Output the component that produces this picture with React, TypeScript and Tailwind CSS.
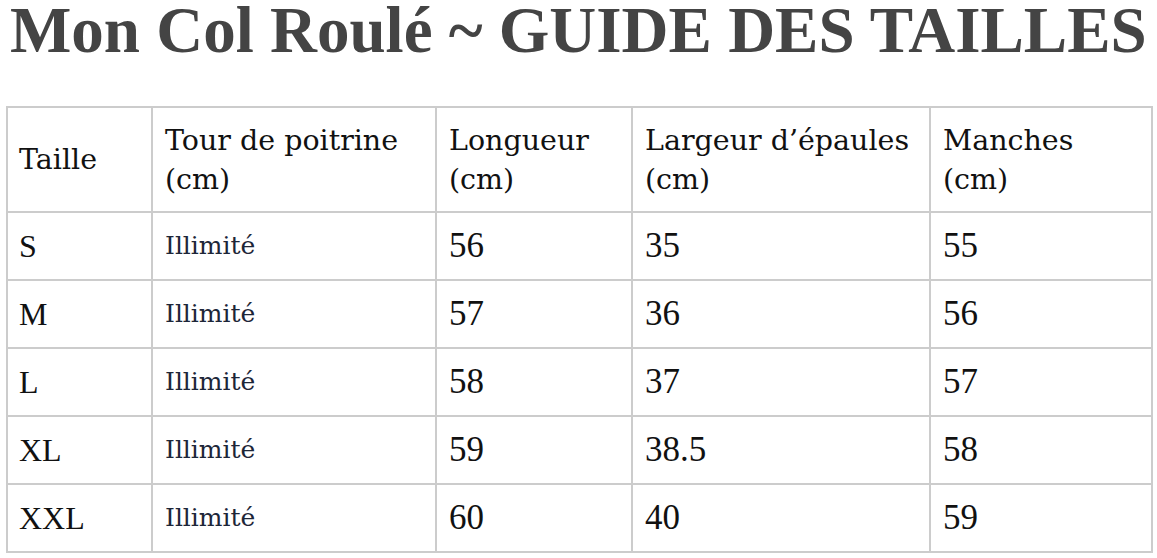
import React from "react";

const rows = [
  ["S", "56", "35", "55"],
  ["M", "57", "36", "56"],
  ["L", "58", "37", "57"],
  ["XL", "59", "38.5", "58"],
  ["XXL", "60", "40", "59"],
];

const cell = "border-2 border-[#cccccc] align-middle";
const dv = { fontFamily: '"DejaVu Serif", serif' };

export default function App() {
  return (
    <div className="w-[1157px] h-[558px] bg-white overflow-hidden pt-px" style={{ fontFamily: '"Liberation Serif", serif' }}>
      <h1 className="pl-[10px] text-[65px] leading-[59px] font-bold text-[#444444] whitespace-nowrap">
        Mon Col Roulé ~ GUIDE DES TAILLES
      </h1>
      <table className="ml-[6px] mt-[46px] border-collapse table-fixed w-[1147px] text-[#111111]">
        <colgroup>
          <col className="w-[145px]" />
          <col className="w-[284px]" />
          <col className="w-[196px]" />
          <col className="w-[298px]" />
          <col className="w-[222px]" />
        </colgroup>
        <tbody>
          <tr className="h-[105px]">
            <td className={`${cell} pl-[11px] text-[28.5px] leading-[39px]`} style={dv}>Taille</td>
            <td className={`${cell} pl-[12px] text-[28.5px] leading-[39px]`} style={dv}>Tour de poitrine<br />(cm)</td>
            <td className={`${cell} pl-[12px] text-[28.5px] leading-[39px]`} style={dv}>Longueur<br />(cm)</td>
            <td className={`${cell} pl-[12px] text-[28.5px] leading-[39px]`} style={dv}>Largeur d’épaules<br />(cm)</td>
            <td className={`${cell} pl-[12px] text-[28.5px] leading-[39px]`} style={dv}>Manches<br />(cm)</td>
          </tr>
          {rows.map((r) => (
            <tr key={r[0]} className="h-[68px]">
              <td className={`${cell} pl-[11px] text-[32px]`}>{r[0]}</td>
              <td className={`${cell} pl-[12px] text-[25px] text-[#1d2638]`} style={dv}>Illimité</td>
              <td className={`${cell} pl-[12px] text-[35px]`}>{r[1]}</td>
              <td className={`${cell} pl-[12px] text-[35px]`}>{r[2]}</td>
              <td className={`${cell} pl-[12px] text-[35px]`}>{r[3]}</td>
            </tr>
          ))}
        </tbody>
      </table>
    </div>
  );
}
